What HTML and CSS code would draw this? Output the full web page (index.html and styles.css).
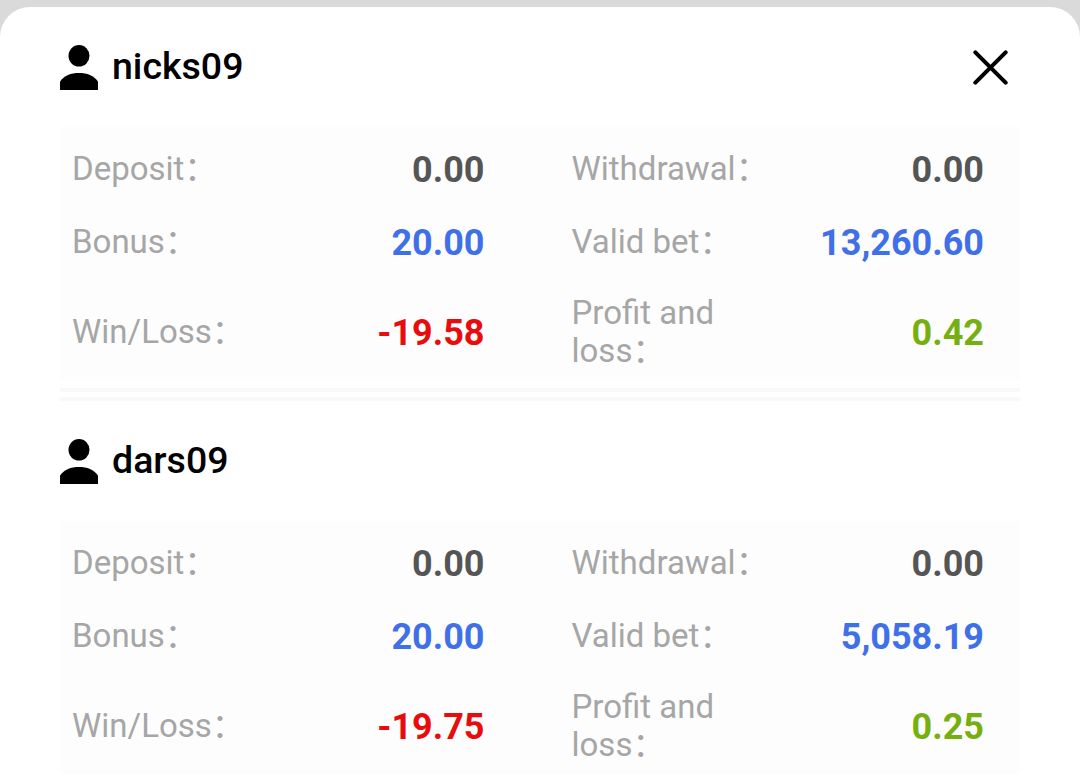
FILE: index.html
```html
<!DOCTYPE html>
<html lang="en">
<head>
    <meta charset="UTF-8" />
    <title>Member Report</title>
    <link rel="stylesheet" href="styles.css">
</head>
<body>

<div class="sheet">
    <section class="member">
        <div class="member-header">
            <svg class="avatar" viewBox="0 0 38 45">
                <ellipse cx="19" cy="10.8" rx="10.5" ry="10.8" />
                <path d="M0 45V36.5C4 30.5 11 28 19 28S34 30.5 38 36.5V45Z" />
            </svg>
            <h2>nicks09</h2>
            <button class="close" type="button" aria-label="Close">
                <svg viewBox="0 0 34 34">
                    <path d="M2.3 2.3L31.7 31.7M31.7 2.3L2.3 31.7" />
                </svg>
            </button>
        </div>
        <div class="stats">
            <div class="stat"><span class="label">Deposit：</span><span class="value">0.00</span></div>
            <div class="stat"><span class="label">Withdrawal：</span><span class="value">0.00</span></div>
            <div class="stat"><span class="label">Bonus：</span><span class="value blue">20.00</span></div>
            <div class="stat"><span class="label">Valid bet：</span><span class="value blue">13,260.60</span></div>
            <div class="stat"><span class="label">Win/Loss：</span><span class="value red">-19.58</span></div>
            <div class="stat"><span class="label">Profit and<br>loss：</span><span class="value green">0.42</span></div>
        </div>
    </section>

    <div class="divider"></div>

    <section class="member">
        <div class="member-header">
            <svg class="avatar" viewBox="0 0 38 45">
                <ellipse cx="19" cy="10.8" rx="10.5" ry="10.8" />
                <path d="M0 45V36.5C4 30.5 11 28 19 28S34 30.5 38 36.5V45Z" />
            </svg>
            <h2>dars09</h2>
        </div>
        <div class="stats">
            <div class="stat"><span class="label">Deposit：</span><span class="value">0.00</span></div>
            <div class="stat"><span class="label">Withdrawal：</span><span class="value">0.00</span></div>
            <div class="stat"><span class="label">Bonus：</span><span class="value blue">20.00</span></div>
            <div class="stat"><span class="label">Valid bet：</span><span class="value blue">5,058.19</span></div>
            <div class="stat"><span class="label">Win/Loss：</span><span class="value red">-19.75</span></div>
            <div class="stat"><span class="label">Profit and<br>loss：</span><span class="value green">0.25</span></div>
        </div>
    </section>
</div>

</body>
</html>
```
FILE: styles.css
```css
* {
    box-sizing: border-box;
}
body {
    margin: 0;
    padding-top: 7px;
    height: 778px;
    overflow: hidden;
    background-color: #dadada;
    font-family: Roboto, "Noto Sans CJK SC", sans-serif;
}
.sheet {
    height: 771px;
    padding: 0 60px;
    background-color: #fff;
    border-radius: 30px 30px 0 0;
}
.member-header {
    display: flex;
    align-items: center;
    height: 120px;
}
.avatar {
    width: 38px;
    height: 45px;
    margin-top: 1px;
    margin-right: 14px;
}
h2 {
    margin: 0;
    padding-bottom: 3px;
    color: #000;
    font-size: 37.5px;
    font-weight: 500;
    line-height: 42px;
}
.close {
    margin-left: auto;
    margin-right: 12px;
    padding: 0;
    border: none;
    background: none;
    cursor: pointer;
}
.close svg {
    display: block;
    width: 35px;
    height: 35px;
    fill: none;
    stroke: #000;
    stroke-width: 4;
    stroke-linecap: round;
}
.stats {
    display: grid;
    grid-template-columns: 1fr 1fr;
    gap: 31px 87px;
    padding: 21px 36px 10px 12px;
    background-color: #fdfdfd;
}
.stat {
    display: flex;
    align-items: center;
    justify-content: space-between;
}
.label {
    color: #a6a6a6;
    font-size: 33px;
    line-height: 38px;
}
.value {
    padding-top: 2px;
    color: #555;
    font-size: 36px;
    font-weight: 700;
    line-height: 40px;
}
.blue { color: #4070e8; }
.red { color: #e80c0c; }
.green { color: #76b010; }
.divider {
    height: 13px;
    margin-top: 8px;
    border-top: 4px solid #f9f9f9;
    border-bottom: 4px solid #f9f9f9;
}
```
